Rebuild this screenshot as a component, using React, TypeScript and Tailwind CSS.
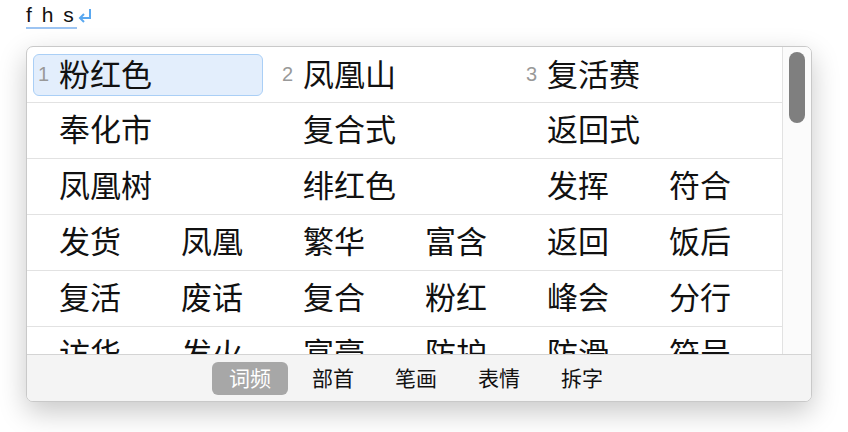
import React from 'react';

const rows: string[][] = [
  ['奉化市', '', '复合式', '', '返回式', ''],
  ['凤凰树', '', '绯红色', '', '发挥', '符合'],
  ['发货', '凤凰', '繁华', '富含', '返回', '饭后'],
  ['复活', '废话', '复合', '粉红', '峰会', '分行'],
  ['访华', '发火', '富豪', '防护', '防滑', '符号'],
];

const top = ['粉红色', '凤凰山', '复活赛'];
const tabs = ['词频', '部首', '笔画', '表情', '拆字'];

const font = { fontFamily: '"Noto Sans CJK SC", "Liberation Sans", sans-serif' };

export default function App() {
  return (
    <div className="w-[848px] h-[432px] bg-white relative" style={font}>
      {/* 输入码 */}
      <div className="pl-[26px] pt-[2px] h-[46px]">
        <div className="flex items-start">
          <span className="text-[21px] leading-[25px] text-[#111] border-b-2 border-[#9cc4f2] tracking-[2px] pr-[1px]" style={{ fontFamily: '"Liberation Sans", sans-serif' }}>
            f h s
          </span>
          <svg width="16" height="16" viewBox="0 0 16 16" className="mt-[6px]" fill="none" stroke="#5aa8f0" strokeWidth="2">
            <path d="M13 1 V10 H3" />
            <path d="M7 6 L3 10 L7 14" strokeLinejoin="miter" />
          </svg>
        </div>
      </div>

      {/* 候选面板 */}
      <div className="ml-[26px] w-[786px] h-[356px] rounded-[7px] border border-[#c9c9c9] bg-white shadow-[0_10px_28px_rgba(0,0,0,0.22)] overflow-hidden flex flex-col">
        <div className="flex h-[307px]">
          <div className="flex-1 overflow-hidden">
            <div className="h-[56px] border-b border-[#e2e2e2] pl-[6px] grid grid-cols-[244px_244px_244px] items-center">
              {top.map((w, i) => (
                <div
                  key={w}
                  className={`h-[42px] w-[230px] flex items-center pl-[4px] pb-[5px] rounded-[6px] border ${
                    i === 0 ? 'bg-[#e3eefc] border-[#aacff6]' : 'border-transparent'
                  }`}
                >
                  <span className="w-[21px] text-[20px] text-[#999] pt-[3px]" style={{ fontFamily: '"Liberation Sans", sans-serif' }}>
                    {i + 1}
                  </span>
                  <span className="text-[31px] leading-none text-[#111]">{w}</span>
                </div>
              ))}
            </div>
            {rows.map((r, ri) => (
              <div key={ri} className="h-[56px] border-b border-[#e2e2e2] pl-[6px] pb-[6px] grid grid-cols-[repeat(6,122px)] items-center">
                {r.map((w, ci) => (
                  <div key={ci} className="pl-[26px] text-[31px] leading-none text-[#111] whitespace-nowrap">
                    {w}
                  </div>
                ))}
              </div>
            ))}
          </div>
          {/* 滚动条 */}
          <div className="w-[29px] border-l border-[#e2e2e2] bg-[#fbfbfb] pt-[5px] flex justify-center">
            <div className="w-[16px] h-[71px] rounded-full bg-[#7f7f7f]" />
          </div>
        </div>

        {/* 排序标签 */}
        <div className="flex-1 bg-[#f4f4f4] border-t border-[#d4d4d4] flex items-center justify-center gap-[7px] pt-[1px] pr-[6px]">
          {tabs.map((t, i) => (
            <div
              key={t}
              className={`h-[33px] px-[17px] pb-[2px] rounded-[6px] flex items-center text-[21px] ${
                i === 0 ? 'bg-[#a7a7a7] text-white' : 'text-[#111]'
              }`}
            >
              {t}
            </div>
          ))}
        </div>
      </div>
    </div>
  );
}
